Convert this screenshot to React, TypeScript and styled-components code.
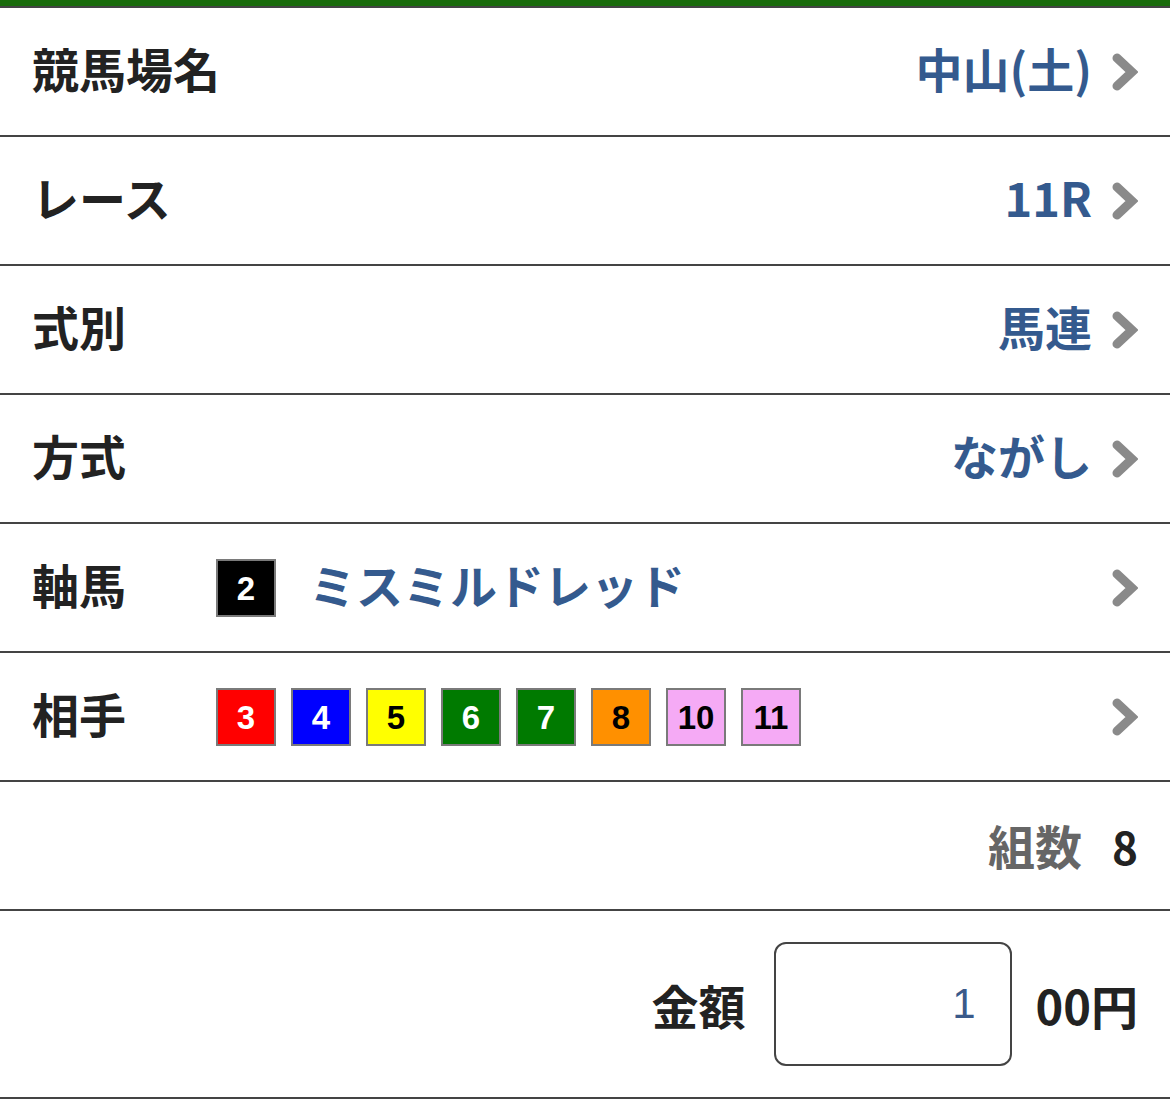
import styled, { createGlobalStyle } from "styled-components";

const GlobalStyle = createGlobalStyle`
    html, body {
        margin: 0;
        padding: 0;
        background: #fff;
    }
    body {
        font-family: "Noto Sans CJK JP", "Liberation Sans", sans-serif;
        color: #222;
    }
`;

const Page = styled.div`
    width: 1170px;
    border-top: 6px solid #196b0b;
`;

const List = styled.div`
    border-top: 2px solid #444;
`;

const Row = styled.div<{ $tall?: boolean }>`
    display: flex;
    align-items: center;
    height: ${(p) => (p.$tall ? 186 : 127)}px;
    padding: 0 32px;
    border-bottom: 2px solid #444;
    box-sizing: content-box;
`;

const Label = styled.div`
    width: 184px;
    flex-shrink: 0;
    white-space: nowrap;
    font-size: 47px;
    font-weight: 700;
    color: #222;
    line-height: 1;
    padding-bottom: 8px;
`;

const Right = styled.div`
    margin-left: auto;
    display: flex;
    align-items: center;
    gap: 20px;
`;

const Value = styled.div`
    font-size: 47px;
    font-weight: 700;
    color: #345a8e;
    line-height: 1;
    white-space: nowrap;
    padding-bottom: 8px;
`;

const Chevron = () => (
    <svg width="26" height="38" viewBox="0 0 26 38">
        <polyline
            points="5,5 20,19 5,33"
            fill="none"
            stroke="#8a8a8a"
            strokeWidth="9"
            strokeLinecap="round"
            strokeLinejoin="miter"
        />
    </svg>
);

const Boxes = styled.div`
    display: flex;
    gap: 15px;
`;

const NumBox = styled.div<{ $bg: string; $fg: string }>`
    width: 56px;
    height: 51px;
    padding-top: 3px;
    box-sizing: content-box;
    border: 2px solid #7a7a7a;
    background: ${(p) => p.$bg};
    color: ${(p) => p.$fg};
    display: flex;
    align-items: center;
    justify-content: center;
    font-family: "Liberation Sans", Arial, sans-serif;
    font-weight: 700;
    font-size: 33px;
`;

const HorseName = styled(Value)`
    margin-left: 33px;
`;

const CountLabel = styled.span`
    font-size: 47px;
    font-weight: 700;
    color: #666;
    line-height: 1;
`;

const CountValue = styled.span`
    font-size: 44px;
    font-weight: 700;
    color: #222;
    margin-left: 30px;
`;

const Amount = styled.div`
    margin-left: auto;
    display: flex;
    align-items: center;
`;

const AmountLabel = styled.span`
    font-size: 47px;
    font-weight: 700;
    color: #222;
`;

const Input = styled.input`
    width: 238px;
    height: 124px;
    box-sizing: border-box;
    margin: 0 24px 0 28px;
    border: 2px solid #444;
    border-radius: 12px;
    padding: 0 34px 0 0;
    text-align: right;
    font-family: "Liberation Sans", Arial, sans-serif;
    font-size: 42px;
    color: #3a5a8a;
    background: #fff;
    outline: none;
`;

const Unit = styled.span`
    font-size: 47px;
    font-weight: 700;
    color: #222;
`;

const partners = [
    { n: 3, bg: "#ff0000", fg: "#fff" },
    { n: 4, bg: "#0000ff", fg: "#fff" },
    { n: 5, bg: "#ffff00", fg: "#000" },
    { n: 6, bg: "#007a00", fg: "#fff" },
    { n: 7, bg: "#007a00", fg: "#fff" },
    { n: 8, bg: "#ff9000", fg: "#000" },
    { n: 10, bg: "#f5aaf5", fg: "#000" },
    { n: 11, bg: "#f5aaf5", fg: "#000" },
];

export default function App() {
    return <Page>
        <GlobalStyle />
        <List>
            <Row>
                <Label>競馬場名</Label>
                <Right><Value>中山(土)</Value><Chevron /></Right>
            </Row>
            <Row>
                <Label>レース</Label>
                <Right><Value>11R</Value><Chevron /></Right>
            </Row>
            <Row>
                <Label>式別</Label>
                <Right><Value>馬連</Value><Chevron /></Right>
            </Row>
            <Row>
                <Label>方式</Label>
                <Right><Value>ながし</Value><Chevron /></Right>
            </Row>
            <Row>
                <Label>軸馬</Label>
                <NumBox $bg="#000" $fg="#fff">2</NumBox>
                <HorseName>ミスミルドレッド</HorseName>
                <Right><Chevron /></Right>
            </Row>
            <Row>
                <Label>相手</Label>
                <Boxes>
                    {partners.map((p) => (
                        <NumBox key={p.n} $bg={p.bg} $fg={p.fg}>{p.n}</NumBox>
                    ))}
                </Boxes>
                <Right><Chevron /></Right>
            </Row>
            <Row>
                <Right>
                    <span>
                        <CountLabel>組数</CountLabel>
                        <CountValue>8</CountValue>
                    </span>
                </Right>
            </Row>
            <Row $tall>
                <Amount>
                    <AmountLabel>金額</AmountLabel>
                    <Input defaultValue="1" />
                    <Unit>00円</Unit>
                </Amount>
            </Row>
        </List>
    </Page>
}
